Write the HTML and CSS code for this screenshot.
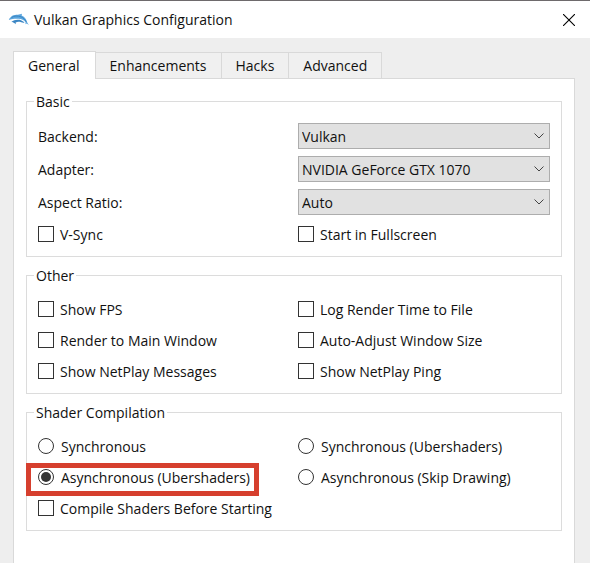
FILE: index.html
```html
<!DOCTYPE html>
<html lang="en">
<head>
    <meta charset="UTF-8">
    <meta name="viewport" content="width=device-width, initial-scale=1.0">
    <title>Vulkan Graphics Configuration</title>
    <link rel="stylesheet" href="styles.css">
</head>
<body>

    <header class="title-bar">
        <svg class="logo" viewBox="0 0 22 14" aria-hidden="true">
            <path fill="#5aa5de" d="M0.8 6.5C2 5.2 3 3.2 5.5 2.3C7.5 1.5 9.5 1.8 11 1.5L14 0.8L13.6 2.4C17 4 18.6 6.5 19 9L20.8 12L18.8 10.6L17.5 11.2L17.6 9.3C16 6.8 13 5.6 10 5.8C7.5 5.9 5 5.7 3.5 6.3C2.5 6.7 1.3 6.9 0.8 6.5Z"/>
            <path fill="#3b86c4" d="M3.5 8.8C5.5 7 8.5 6.3 11.5 6.8C13.5 7.2 15.5 8.4 16.5 10L13.2 9.3C11 8.6 9 8.7 7.5 9.7L8 11.2L5.8 9.7C5 9.4 4.3 9.5 3.5 8.8Z"/>
            <path fill="none" stroke="#2f78b5" stroke-width="0.7" d="M3.5 4.6C6 2.8 9.5 2.6 13 3.8C15 4.6 17 6.3 18.3 8.8"/>
        </svg>
        <h1>Vulkan Graphics Configuration</h1>
        <button class="close" type="button" aria-label="Close">
            <svg viewBox="0 0 12 12" aria-hidden="true">
                <path fill="none" stroke="#000" stroke-width="1.1" d="M0 0L12 12M12 0L0 12"/>
            </svg>
        </button>
    </header>

    <main class="window">
        <div class="tabs" role="tablist">
            <button class="tab active" type="button" role="tab" aria-selected="true">General</button>
            <button class="tab" type="button" role="tab" aria-selected="false">Enhancements</button>
            <button class="tab" type="button" role="tab" aria-selected="false">Hacks</button>
            <button class="tab" type="button" role="tab" aria-selected="false">Advanced</button>
        </div>

        <form class="panel">
            <fieldset>
                <legend>Basic</legend>
                <div class="grid">
                    <label for="backend">Backend:</label>
                    <select id="backend">
                        <option>Vulkan</option>
                    </select>
                    <label for="adapter">Adapter:</label>
                    <select id="adapter">
                        <option>NVIDIA GeForce GTX 1070</option>
                    </select>
                    <label for="aspect">Aspect Ratio:</label>
                    <select id="aspect">
                        <option>Auto</option>
                    </select>
                    <label class="option"><input type="checkbox">V-Sync</label>
                    <label class="option"><input type="checkbox">Start in Fullscreen</label>
                </div>
            </fieldset>

            <fieldset>
                <legend>Other</legend>
                <div class="grid">
                    <label class="option"><input type="checkbox">Show FPS</label>
                    <label class="option"><input type="checkbox">Log Render Time to File</label>
                    <label class="option"><input type="checkbox">Render to Main Window</label>
                    <label class="option"><input type="checkbox">Auto-Adjust Window Size</label>
                    <label class="option"><input type="checkbox">Show NetPlay Messages</label>
                    <label class="option"><input type="checkbox">Show NetPlay Ping</label>
                </div>
            </fieldset>

            <fieldset>
                <legend>Shader Compilation</legend>
                <div class="grid">
                    <label class="option"><input type="radio" name="shaders">Synchronous</label>
                    <label class="option"><input type="radio" name="shaders">Synchronous (Ubershaders)</label>
                    <label class="option highlight"><input type="radio" name="shaders" checked>Asynchronous (Ubershaders)</label>
                    <label class="option"><input type="radio" name="shaders">Asynchronous (Skip Drawing)</label>
                    <label class="option"><input type="checkbox">Compile Shaders Before Starting</label>
                </div>
            </fieldset>
        </form>
    </main>

</body>
</html>
```
FILE: styles.css
```css
* {
    box-sizing: border-box;
}

body {
    margin: 0;
    min-height: 100vh;
    display: flex;
    flex-direction: column;
    font-family: "Segoe UI", "Open Sans", "Noto Sans", sans-serif;
    font-size: 14px;
    line-height: 19px;
    color: #111;
    background-color: #eee;
}

button, select {
    font: inherit;
    color: inherit;
}

.title-bar {
    display: flex;
    align-items: center;
    height: 38px;
    padding: 0 8px;
    border-top: 1px solid #6e6a6c;
    background-color: #fff;
}

.title-bar h1 {
    flex: 1;
    margin: 0 0 0 4px;
    font-size: 14px;
    font-weight: normal;
}

.logo {
    width: 22px;
    height: 14px;
}

.close {
    display: flex;
    padding: 7px;
    border: none;
    background: none;
}

.close svg {
    width: 12px;
    height: 12px;
}

.window {
    flex: 1;
    display: flex;
    flex-direction: column;
    padding: 13px 15px 0 13px;
}

.tabs {
    display: flex;
    align-items: flex-end;
}

.tab {
    height: 26px;
    padding: 0 14px;
    border: 1px solid #d9d9d9;
    border-left: none;
    border-bottom: none;
    background-color: #f0f0f0;
}

.tab.active {
    height: 28px;
    margin-bottom: -1px;
    padding-right: 15px;
    border-left: 1px solid #d9d9d9;
    background-color: #fff;
    z-index: 1;
}

.panel {
    flex: 1;
    padding: 13px 12px;
    border: 1px solid #d9d9d9;
    border-bottom: none;
    background-color: #fff;
}

fieldset {
    min-width: 0;
    margin: 0 0 9px;
    padding: 12px 11px 10px;
    border: 1px solid #dcdcdc;
}

legend {
    margin-left: -4px;
    padding: 0 2px;
}

.grid {
    display: grid;
    grid-template-columns: 1fr 1fr;
    gap: 7px 8px;
    align-items: center;
}

select {
    width: 100%;
    height: 26px;
    padding: 0 3px;
    border: 1px solid #adadad;
    border-radius: 0;
    appearance: none;
    background: #e1e1e1 url("data:image/svg+xml,%3Csvg xmlns='http://www.w3.org/2000/svg' width='10' height='6'%3E%3Cpath d='M0.5 0.5L5 5L9.5 0.5' fill='none' stroke='%23444'/%3E%3C/svg%3E") no-repeat right 5px center;
}

.option {
    display: flex;
    align-items: center;
    justify-self: start;
    gap: 6px;
    height: 24px;
}

.option input {
    appearance: none;
    width: 16px;
    height: 16px;
    margin: 0;
    border: 1px solid #333;
    background-color: #fff;
}

.option input[type="radio"] {
    margin-right: 1px;
    border-radius: 50%;
}

.option input:checked {
    padding: 2px;
    background-color: #333;
    background-clip: content-box;
}

.highlight {
    position: relative;
}

.highlight::after {
    content: "";
    position: absolute;
    top: -2px;
    right: -9px;
    bottom: -7px;
    left: -12px;
    border: 5px solid #d63f2e;
}
```
